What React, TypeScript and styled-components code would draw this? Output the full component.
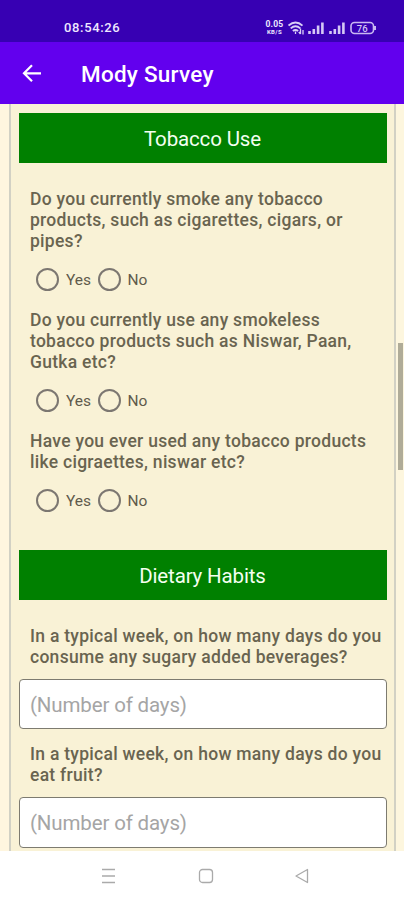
import React from "react";
import styled, { createGlobalStyle } from "styled-components";

const GlobalStyle = createGlobalStyle`
  * { box-sizing: border-box; }
  body { margin: 0; background: #fff; font-family: Roboto, sans-serif; }
`;

const Screen = styled.div`
  width: 404px;
  height: 900px;
  display: flex;
  flex-direction: column;
  overflow: hidden;
`;

const StatusBar = styled.header`
  height: 42px;
  flex: none;
  display: flex;
  align-items: center;
  padding: 13px 27.5px 0 64px;
  background: #3700b3;
  color: #eee8ff;
`;

const Clock = styled.span`
  flex: 1;
  font: 500 13px/16px Roboto, sans-serif;
  letter-spacing: 0.65px;
`;

const StatusIcons = styled.div`
  display: flex;
  align-items: center;
  height: 16px;
`;

const Speed = styled.div`
  width: 20px;
  margin-right: 3px;
  display: flex;
  flex-direction: column;
  align-items: center;
  font: 700 8.5px/8px Roboto, sans-serif;
  letter-spacing: 0.2px;
  white-space: nowrap;
`;

const SpeedUnit = styled.span`
  font-size: 6px;
  line-height: 7px;
  letter-spacing: 0.4px;
`;

const AppBar = styled.div`
  height: 62px;
  flex: none;
  display: flex;
  align-items: center;
  padding: 0 22px;
  background: #6200ee;
  color: #fff;
`;

const Title = styled.h1`
  margin: 2px 0 0 39px;
  font: 500 22.5px/28px Roboto, sans-serif;
  letter-spacing: 0.25px;
`;

const Viewport = styled.main`
  height: 747px;
  flex: none;
  display: flex;
  padding-left: 9px;
  overflow: hidden;
  background: linear-gradient(90deg, #fff6df 50%, #fdf6de 50%);
`;

const Card = styled.section`
  width: 387px;
  border: solid #d2d1c4;
  border-width: 0 2px;
  padding: 9px 7.5px 0;
  background: #f9f2d6;
`;

const ScrollThumb = styled.div`
  width: 5px;
  height: 127px;
  margin: 239px 0 0 2px;
  background: #b0ac98;
`;

const SectionTitle = styled.h2<{ $top?: number }>`
  height: 49.5px;
  margin: ${(p) => p.$top ?? 0}px 0 26px;
  padding-top: 2px;
  display: flex;
  align-items: center;
  justify-content: center;
  background: #008000;
  color: #f4fff0;
  font: 400 20.5px/24px Roboto, sans-serif;
  letter-spacing: -0.15px;
`;

const Question = styled.div`
  padding-left: 11.5px;
`;

const Line = styled.div`
  height: 21.35px;
  font: 500 17.5px/21.35px Roboto, sans-serif;
  letter-spacing: 0.28px;
  color: #696450;
  white-space: nowrap;
`;

const Options = styled.div`
  display: flex;
  align-items: center;
  height: 57.2px;
  padding: 0 0 3px 6px;
`;

const Option = styled.label`
  display: flex;
  align-items: center;
  width: 61.5px;
  gap: 7px;
  font: 400 15.5px/20px Roboto, sans-serif;
  color: #5f5b4c;
`;

const Radio = styled.input`
  appearance: none;
  flex: none;
  width: 23px;
  height: 23px;
  margin: 0;
  border: 2px solid #7c7771;
  border-radius: 50%;
`;

const DaysInput = styled.input`
  display: block;
  width: 100%;
  height: 50.5px;
  margin: 10.8px 0 14.2px;
  padding: 2px 10.5px 0;
  border: 1px solid #7d7b70;
  border-radius: 4px;
  background: #fff;
  font: 400 20.5px/24px Roboto, sans-serif;
  letter-spacing: -0.15px;
  &::placeholder { color: #a5a5a5; opacity: 1; }
`;

const NavBar = styled.nav`
  flex: 1;
  display: flex;
  align-items: center;
  justify-content: space-between;
  padding: 0 94px 0 100px;
  background: #fff;
`;

const Prompt = ({ lines }: { lines: string[] }) => (
  <Question>
    {lines.map((l) => <Line key={l}>{l}</Line>)}
  </Question>
);

const YesNo = ({ name }: { name: string }) => (
  <Question>
    <Options>
      <Option><Radio type="radio" name={name} />Yes</Option>
      <Option><Radio type="radio" name={name} />No</Option>
    </Options>
  </Question>
);

const Signal = () => (
  <svg width="21" height="14" viewBox="0 0 21 14" fill="none" stroke="#d5c8f5" strokeWidth="2.6">
    <path d="M1.5 13V10M5.8 13V8M10.1 13V4.5M14.4 13V1.5" />
  </svg>
);

export default function App() {
  return (
    <>
      <GlobalStyle />
      <Screen>
        <StatusBar>
          <Clock>08:54:26</Clock>
          <StatusIcons>
            <Speed>
              <span>0.05</span>
              <SpeedUnit>KB/S</SpeedUnit>
            </Speed>
            <svg width="20" height="14" viewBox="0 0 20 14" fill="none" stroke="#d9cff7" strokeWidth="1.9">
              <path d="M.5 4.6Q7.5 -1.6 14.5 4.6M2.7 7.4Q7.5 3.2 12.3 7.4M4.9 10Q7.5 7.8 10.1 10" />
              <path d="M7.5 10.5V13M12.5 7.5V13M10.8 11l1.7 2M15 13.5V9" strokeWidth="1.3" />
            </svg>
            <Signal />
            <Signal />
            <svg width="27" height="14" viewBox="0 0 27 14">
              <rect x="1" y="1.5" width="22.5" height="11" rx="3.5" fill="none" stroke="#c9b9f2" strokeWidth="1.6" />
              <path d="M25 5v4" stroke="#c9b9f2" strokeWidth="2" />
              <text x="12.2" y="10.5" textAnchor="middle" fontFamily="Roboto" fontSize="9.5" fontWeight="500" fill="#d5c8f5">76</text>
            </svg>
          </StatusIcons>
        </StatusBar>
        <AppBar>
          <svg width="20" height="20" viewBox="0 0 20 20" fill="none" stroke="#fff" strokeWidth="2.2">
            <path d="M19 10.3H2.5M10 2.3L2 10.3l8 8" />
          </svg>
          <Title>Mody Survey</Title>
        </AppBar>
        <Viewport>
          <Card>
            <SectionTitle>Tobacco Use</SectionTitle>
            <Prompt lines={["Do you currently smoke any tobacco", "products, such as cigarettes, cigars, or", "pipes?"]} />
            <YesNo name="smoke" />
            <Prompt lines={["Do you currently use any smokeless", "tobacco products such as Niswar, Paan,", "Gutka etc?"]} />
            <YesNo name="smokeless" />
            <Prompt lines={["Have you ever used any tobacco products", "like cigraettes, niswar etc?"]} />
            <YesNo name="ever" />
            <SectionTitle $top={19.2}>Dietary Habits</SectionTitle>
            <Prompt lines={["In a typical week, on how many days do you", "consume any sugary added beverages?"]} />
            <DaysInput placeholder="(Number of days)" />
            <Prompt lines={["In a typical week, on how many days do you", "eat fruit?"]} />
            <DaysInput placeholder="(Number of days)" />
          </Card>
          <ScrollThumb />
        </Viewport>
        <NavBar>
          <svg width="17" height="16" viewBox="0 0 17 16" stroke="#aaa" strokeWidth="1.3">
            <path d="M2 1.5h13M2 8h13M2 14.5h13" />
          </svg>
          <svg width="16" height="16" viewBox="0 0 16 16" fill="none" stroke="#aaa" strokeWidth="1.3">
            <rect x="1.5" y="1.5" width="13" height="13" rx="3" />
          </svg>
          <svg width="16" height="16" viewBox="0 0 16 16" fill="none" stroke="#aaa" strokeWidth="1.3" strokeLinejoin="round">
            <path d="M13.5 1.5v13L2 8z" />
          </svg>
        </NavBar>
      </Screen>
    </>
  );
}
